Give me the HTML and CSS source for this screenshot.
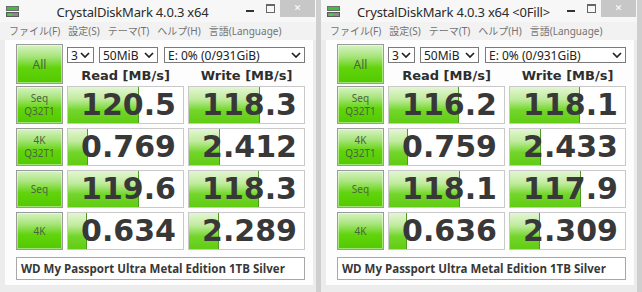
FILE: index.html
```html
<!DOCTYPE html>
<html lang="ja">
<head>
    <meta charset="UTF-8">
    <title>CrystalDiskMark</title>
    <link rel="stylesheet" href="styles.css">
</head>
<body>
    <div class="desk">
        <!-- left window -->
        <div class="window">
            <div class="titlebar">
                <svg class="app-icon" width="13" height="11" viewBox="0 0 13 11">
                    <rect x="0.5" y="0.5" width="12" height="4" fill="#3fbf3f" stroke="#6d6d6d"/>
                    <rect x="0.5" y="6.5" width="12" height="4" fill="#8a8a8a" stroke="#5a5a5a"/>
                    <rect x="2" y="8" width="4" height="1.5" fill="#4ed04e"/>
                </svg>
                <span class="title">CrystalDiskMark 4.0.3 x64</span>
                <div class="controls">
                    <span class="ctl min"></span>
                    <span class="ctl max"></span>
                    <span class="ctl close">&#x2715;</span>
                </div>
            </div>
            <div class="menubar">
                <span>ファイル(F)</span>
                <span>設定(S)</span>
                <span>テーマ(T)</span>
                <span>ヘルプ(H)</span>
                <span>言語(Language)</span>
            </div>
            <div class="client">
                <div class="top">
                    <button class="test all">All</button>
                    <div class="top-right">
                        <div class="options">
                            <div class="select s-count">3<svg class="chev" width="10" height="6" viewBox="0 0 10 6"><path d="M1 1 L5 5 L9 1" fill="none" stroke="#222" stroke-width="1.7"/></svg></div>
                            <div class="select s-size">50MiB<svg class="chev" width="10" height="6" viewBox="0 0 10 6"><path d="M1 1 L5 5 L9 1" fill="none" stroke="#222" stroke-width="1.7"/></svg></div>
                            <div class="select s-drive">E: 0% (0/931GiB)<svg class="chev" width="10" height="6" viewBox="0 0 10 6"><path d="M1 1 L5 5 L9 1" fill="none" stroke="#222" stroke-width="1.7"/></svg></div>
                        </div>
                        <div class="heads">
                            <div class="head">Read [MB/s]</div>
                            <div class="head">Write [MB/s]</div>
                        </div>
                    </div>
                </div>
                <div class="results">
                    <button class="test">Seq<br>Q32T1</button>
                    <div class="result"><span class="meter" style="width:71px"></span><span class="value">120.5</span></div>
                    <div class="result"><span class="meter" style="width:71px"></span><span class="value">118.3</span></div>

                    <button class="test">4K<br>Q32T1</button>
                    <div class="result"><span class="meter" style="width:20px"></span><span class="value">0.769</span></div>
                    <div class="result"><span class="meter" style="width:31px"></span><span class="value">2.412</span></div>

                    <button class="test">Seq</button>
                    <div class="result"><span class="meter" style="width:71px"></span><span class="value">119.6</span></div>
                    <div class="result"><span class="meter" style="width:70px"></span><span class="value">118.3</span></div>

                    <button class="test">4K</button>
                    <div class="result"><span class="meter" style="width:19px"></span><span class="value">0.634</span></div>
                    <div class="result"><span class="meter" style="width:30px"></span><span class="value">2.289</span></div>
                </div>
                <div class="drive">WD My Passport Ultra Metal Edition 1TB Silver</div>
            </div>
        </div>

        <!-- right window -->
        <div class="window">
            <div class="titlebar">
                <svg class="app-icon" width="13" height="11" viewBox="0 0 13 11">
                    <rect x="0.5" y="0.5" width="12" height="4" fill="#3fbf3f" stroke="#6d6d6d"/>
                    <rect x="0.5" y="6.5" width="12" height="4" fill="#8a8a8a" stroke="#5a5a5a"/>
                    <rect x="2" y="8" width="4" height="1.5" fill="#4ed04e"/>
                </svg>
                <span class="title">CrystalDiskMark 4.0.3 x64 &lt;0Fill&gt;</span>
                <div class="controls">
                    <span class="ctl min"></span>
                    <span class="ctl max"></span>
                    <span class="ctl close">&#x2715;</span>
                </div>
            </div>
            <div class="menubar">
                <span>ファイル(F)</span>
                <span>設定(S)</span>
                <span>テーマ(T)</span>
                <span>ヘルプ(H)</span>
                <span>言語(Language)</span>
            </div>
            <div class="client">
                <div class="top">
                    <button class="test all">All</button>
                    <div class="top-right">
                        <div class="options">
                            <div class="select s-count">3<svg class="chev" width="10" height="6" viewBox="0 0 10 6"><path d="M1 1 L5 5 L9 1" fill="none" stroke="#222" stroke-width="1.7"/></svg></div>
                            <div class="select s-size">50MiB<svg class="chev" width="10" height="6" viewBox="0 0 10 6"><path d="M1 1 L5 5 L9 1" fill="none" stroke="#222" stroke-width="1.7"/></svg></div>
                            <div class="select s-drive">E: 0% (0/931GiB)<svg class="chev" width="10" height="6" viewBox="0 0 10 6"><path d="M1 1 L5 5 L9 1" fill="none" stroke="#222" stroke-width="1.7"/></svg></div>
                        </div>
                        <div class="heads">
                            <div class="head">Read [MB/s]</div>
                            <div class="head">Write [MB/s]</div>
                        </div>
                    </div>
                </div>
                <div class="results">
                    <button class="test">Seq<br>Q32T1</button>
                    <div class="result"><span class="meter" style="width:70px"></span><span class="value">116.2</span></div>
                    <div class="result"><span class="meter" style="width:70px"></span><span class="value">118.1</span></div>

                    <button class="test">4K<br>Q32T1</button>
                    <div class="result"><span class="meter" style="width:19px"></span><span class="value">0.759</span></div>
                    <div class="result"><span class="meter" style="width:31px"></span><span class="value">2.433</span></div>

                    <button class="test">Seq</button>
                    <div class="result"><span class="meter" style="width:71px"></span><span class="value">118.1</span></div>
                    <div class="result"><span class="meter" style="width:71px"></span><span class="value">117.9</span></div>

                    <button class="test">4K</button>
                    <div class="result"><span class="meter" style="width:18px"></span><span class="value">0.636</span></div>
                    <div class="result"><span class="meter" style="width:30px"></span><span class="value">2.309</span></div>
                </div>
                <div class="drive">WD My Passport Ultra Metal Edition 1TB Silver</div>
            </div>
        </div>
    </div>
</body>
</html>
```

FILE: styles.css
```css
body {
    margin: 0;
    background-color: #cfcfcf;
    font-family: "Noto Sans", "Noto Sans CJK JP", sans-serif;
    overflow: hidden;
}

.desk {
    display: flex;
    gap: 5px;
    width: 642px;
    height: 292px;
}

.window {
    width: 316px;
    flex: none;
    background-color: #ececec;
    display: flex;
    flex-direction: column;
}

/* title bar */
.titlebar {
    height: 22px;
    display: flex;
    align-items: flex-start;
    background-color: #f7f7f7;
}

.app-icon {
    margin: 6px 0 0 6px;
    flex: none;
}

.title {
    flex: 1;
    text-align: center;
    font-size: 13px;
    letter-spacing: -0.2px;
    line-height: 25px;
    color: #2b2b2b;
    white-space: nowrap;
}

.controls {
    display: flex;
    align-items: flex-start;
    margin-right: 1px;
}

.ctl {
    display: block;
    flex: none;
}

.min {
    width: 8px;
    height: 2px;
    background-color: #333;
    margin: 10px 12px 0 0;
}

.max {
    width: 7px;
    height: 6px;
    border: 1px solid #666;
    border-top-width: 2px;
    margin: 4px 5px 0 0;
}

.close {
    width: 35px;
    height: 17px;
    background-color: #c7c7c7;
    color: #fff;
    font-size: 9px;
    line-height: 17px;
    text-align: center;
    font-family: "DejaVu Sans", sans-serif;
}

/* menu */
.menubar {
    height: 18px;
    display: flex;
    gap: 8px;
    padding-left: 9px;
    background-color: #f2f2f2;
    font-size: 10px;
    line-height: 18px;
    color: #727272;
    white-space: nowrap;
}

/* main area */
.client {
    margin: 0 3px 0 5px;
    padding: 4px 0 0 11px;
    height: 241px;
    background-color: #fdfdfd;
}

.top {
    display: flex;
    gap: 4px;
    height: 41px;
}

.test {
    margin: 0;
    padding: 0;
    border: 1px solid #9a9a9a;
    border-radius: 0;
    background: linear-gradient(#d6f3c2, #a8e47c 30%, #62d40c 60%, #52c900);
    box-shadow: inset 0 0 0 1px rgba(255, 255, 255, 0.45);
    color: #4a6640;
    font-family: "Noto Sans", sans-serif;
    font-size: 10px;
    line-height: 13px;
    cursor: pointer;
}

.test.all {
    width: 47px;
    height: 40px;
    font-size: 12px;
}

.top-right {
    width: 238px;
}

.options {
    display: flex;
    margin-top: 3px;
    height: 16px;
}

.select {
    box-sizing: border-box;
    height: 16px;
    border: 1px solid #7a7a7a;
    background-color: #fff;
    display: flex;
    align-items: center;
    justify-content: space-between;
    padding: 0 3px 0 3px;
    font-size: 12px;
    color: #222;
    white-space: nowrap;
}

.s-count {
    width: 27px;
    margin-right: 5px;
}

.s-size {
    width: 59px;
    margin-right: 6px;
}

.s-drive {
    width: 141px;
}

.heads {
    display: grid;
    grid-template-columns: 117px 117px;
    column-gap: 4px;
    margin-top: 4px;
    height: 18px;
}

.head {
    text-align: center;
    font-family: "DejaVu Sans", sans-serif;
    font-weight: bold;
    font-size: 13px;
    line-height: 18px;
    color: #2e2e2e;
}

/* results */
.results {
    display: grid;
    grid-template-columns: 47px 117px 117px;
    grid-auto-rows: 38px;
    gap: 4px;
    margin-top: 1px;
}

.result {
    box-sizing: border-box;
    border: 1px solid #c9c9c9;
    background-color: #fff;
    display: grid;
    overflow: hidden;
}

.result > span {
    grid-area: 1 / 1;
}

.meter {
    justify-self: start;
    box-sizing: border-box;
    height: 100%;
    border-right: 1px solid #4f9a22;
    background: linear-gradient(#e4f6d4, #bfeb9c 35%, #72d62a 65%, #62cc14);
}

.value {
    justify-self: end;
    align-self: center;
    padding-right: 7px;
    font-family: "DejaVu Sans", sans-serif;
    font-weight: bold;
    font-size: 30px;
    line-height: 36px;
    color: #383838;
}

.drive {
    box-sizing: border-box;
    width: 289px;
    height: 23px;
    margin-top: 7px;
    border: 1px solid #a8a8a8;
    background-color: #fff;
    padding-left: 4px;
    font-family: "Open Sans", sans-serif;
    font-weight: bold;
    font-size: 11.5px;
    line-height: 21px;
    color: #383838;
    white-space: nowrap;
}
```
